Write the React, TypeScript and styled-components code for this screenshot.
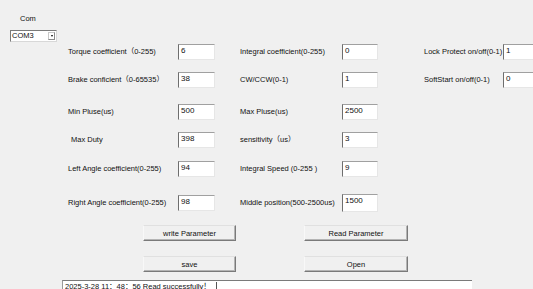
import React from 'react'
import styled, { createGlobalStyle } from 'styled-components'

const GlobalStyle = createGlobalStyle`
  html, body {
    margin: 0;
    padding: 0;
    background: #f0f0f0;
  }
  body {
    font-family: "Liberation Sans", Arial, "Noto Sans CJK SC", sans-serif;
    font-size: 7.5px;
    color: #111;
  }
`

const StyledWindow = styled.div`
  width: 533px;
  height: 289px;
  overflow: hidden;
  background: #f0f0f0;
`

const StyledHeader = styled.div`
  display: flex;
  flex-direction: column;
  align-items: flex-start;
  padding: 14px 0 0 10px;
`

const StyledComLabel = styled.span`
  margin-left: 10px;
  line-height: 10px;
`

const StyledCombo = styled.div`
  margin-top: 6px;
  width: 47px;
  height: 12px;
  box-sizing: border-box;
  background: #fff;
  border: 1px solid #7a7a7a;
  border-right-color: #d8d8d8;
  border-bottom-color: #d8d8d8;
  display: flex;
  align-items: center;
  justify-content: space-between;
  padding-left: 1px;
  line-height: 10px;
`

const StyledComboButton = styled.span`
  width: 7px;
  height: 8px;
  margin-right: 1px;
  box-sizing: border-box;
  border: 1px solid #c8c8c8;
  border-right-color: #8a8a8a;
  border-bottom-color: #8a8a8a;
  display: flex;
  align-items: center;
  justify-content: center;

  &::after {
    content: '';
    border-left: 1.5px solid transparent;
    border-right: 1.5px solid transparent;
    border-top: 2px solid #000;
  }
`

const StyledParams = styled.div`
  display: flex;
  flex-direction: column;
  padding-left: 68px;
`

const StyledRow = styled.div<{ $top: number }>`
  display: grid;
  grid-template-columns: 172px 184px auto;
  align-items: center;
  margin-top: ${(p) => p.$top}px;
`

const StyledField = styled.div`
  display: flex;
  align-items: center;
`

const StyledLabel = styled.span<{ $width: number; $indent?: number }>`
  width: ${(p) => p.$width}px;
  padding-left: ${(p) => p.$indent ?? 0}px;
  box-sizing: border-box;
  white-space: nowrap;
  line-height: 10px;
`

const StyledInput = styled.div<{ $width: number; $height?: number }>`
  width: ${(p) => p.$width}px;
  height: ${(p) => p.$height ?? 16}px;
  box-sizing: border-box;
  background: #fff;
  border-top: 1px solid #a0a0a0;
  border-left: 1px solid #6e6e6e;
  border-right: 1px solid #e6e6e6;
  border-bottom: 1px solid #e6e6e6;
  padding: 1px 0 0 2px;
  font-size: 8px;
  line-height: 10px;
`

const StyledButtons = styled.div`
  display: grid;
  grid-template-columns: 93px 104px;
  column-gap: 68px;
  row-gap: 15px;
  margin: 13px 0 0 143px;
`

const StyledButton = styled.div`
  height: 16px;
  box-sizing: border-box;
  display: flex;
  align-items: center;
  justify-content: center;
  background: #f0f0f0;
  border-top: 1px solid #e0e0e0;
  border-left: 1px solid #f8f8f8;
  border-right: 1px solid #7a7a7a;
  border-bottom: 1px solid #7a7a7a;
  box-shadow: inset -1px -1px 0 #b4b4b4;
`

const StyledStatus = styled.div`
  margin: 8px 0 0 62px;
  width: 410px;
  height: 20px;
  box-sizing: border-box;
  background: #fff;
  border-top: 1px solid #7a7a7a;
  border-left: 1px solid #9a9a9a;
  padding: 1px 0 0 2px;
  line-height: 10px;
  white-space: nowrap;
  display: flex;
  align-items: flex-start;
`

const StyledCaret = styled.span`
  display: inline-block;
  width: 1px;
  height: 9px;
  background: #555;
  margin-left: 5px;
`

type Param = {
  label: string
  value: string
  indent?: number
  inputHeight?: number
}

type ParamRow = {
  top: number
  cells: Param[]
}

const labelWidths = [110, 102, 79]
const inputWidths = [37, 36, 40]

const rows: ParamRow[] = [
  {
    top: 2,
    cells: [
      { label: 'Torque coefficient（0-255)', value: '6' },
      { label: 'Integral coefficient(0-255)', value: '0' },
      { label: 'Lock Protect on/off(0-1)', value: '1' },
    ],
  },
  {
    top: 12,
    cells: [
      { label: 'Brake conficient（0-65535）', value: '38' },
      { label: 'CW/CCW(0-1)', value: '1' },
      { label: 'SoftStart on/off(0-1)', value: '0' },
    ],
  },
  {
    top: 16,
    cells: [
      { label: 'Min Pluse(us)', value: '500' },
      { label: 'Max Pluse(us)', value: '2500' },
    ],
  },
  {
    top: 12,
    cells: [
      { label: 'Max Duty', value: '398', indent: 3 },
      { label: 'sensitivity（us）', value: '3' },
    ],
  },
  {
    top: 13,
    cells: [
      { label: 'Left Angle coefficient(0-255)', value: '94' },
      { label: 'Integral Speed (0-255 )', value: '9' },
    ],
  },
  {
    top: 17,
    cells: [
      { label: 'Right Angle coefficient(0-255)', value: '98' },
      { label: 'Middle position(500-2500us)', value: '1500', inputHeight: 18 },
    ],
  },
]

const App = () => {
  return (
    <>
      <GlobalStyle />
      <StyledWindow>
        <StyledHeader>
          <StyledComLabel>Com</StyledComLabel>
          <StyledCombo>
            <span>COM3</span>
            <StyledComboButton />
          </StyledCombo>
        </StyledHeader>
        <StyledParams>
          {rows.map((row, r) => (
            <StyledRow key={r} $top={row.top}>
              {row.cells.map((cell, c) => (
                <StyledField key={cell.label}>
                  <StyledLabel $width={labelWidths[c]} $indent={cell.indent}>
                    {cell.label}
                  </StyledLabel>
                  <StyledInput $width={inputWidths[c]} $height={cell.inputHeight}>
                    {cell.value}
                  </StyledInput>
                </StyledField>
              ))}
            </StyledRow>
          ))}
        </StyledParams>
        <StyledButtons>
          <StyledButton>write Parameter</StyledButton>
          <StyledButton>Read Parameter</StyledButton>
          <StyledButton>save</StyledButton>
          <StyledButton>Open</StyledButton>
        </StyledButtons>
        <StyledStatus>
          <span>2025-3-28 11：48：56 Read successfully！</span>
          <StyledCaret />
        </StyledStatus>
      </StyledWindow>
    </>
  )
}

export default App
